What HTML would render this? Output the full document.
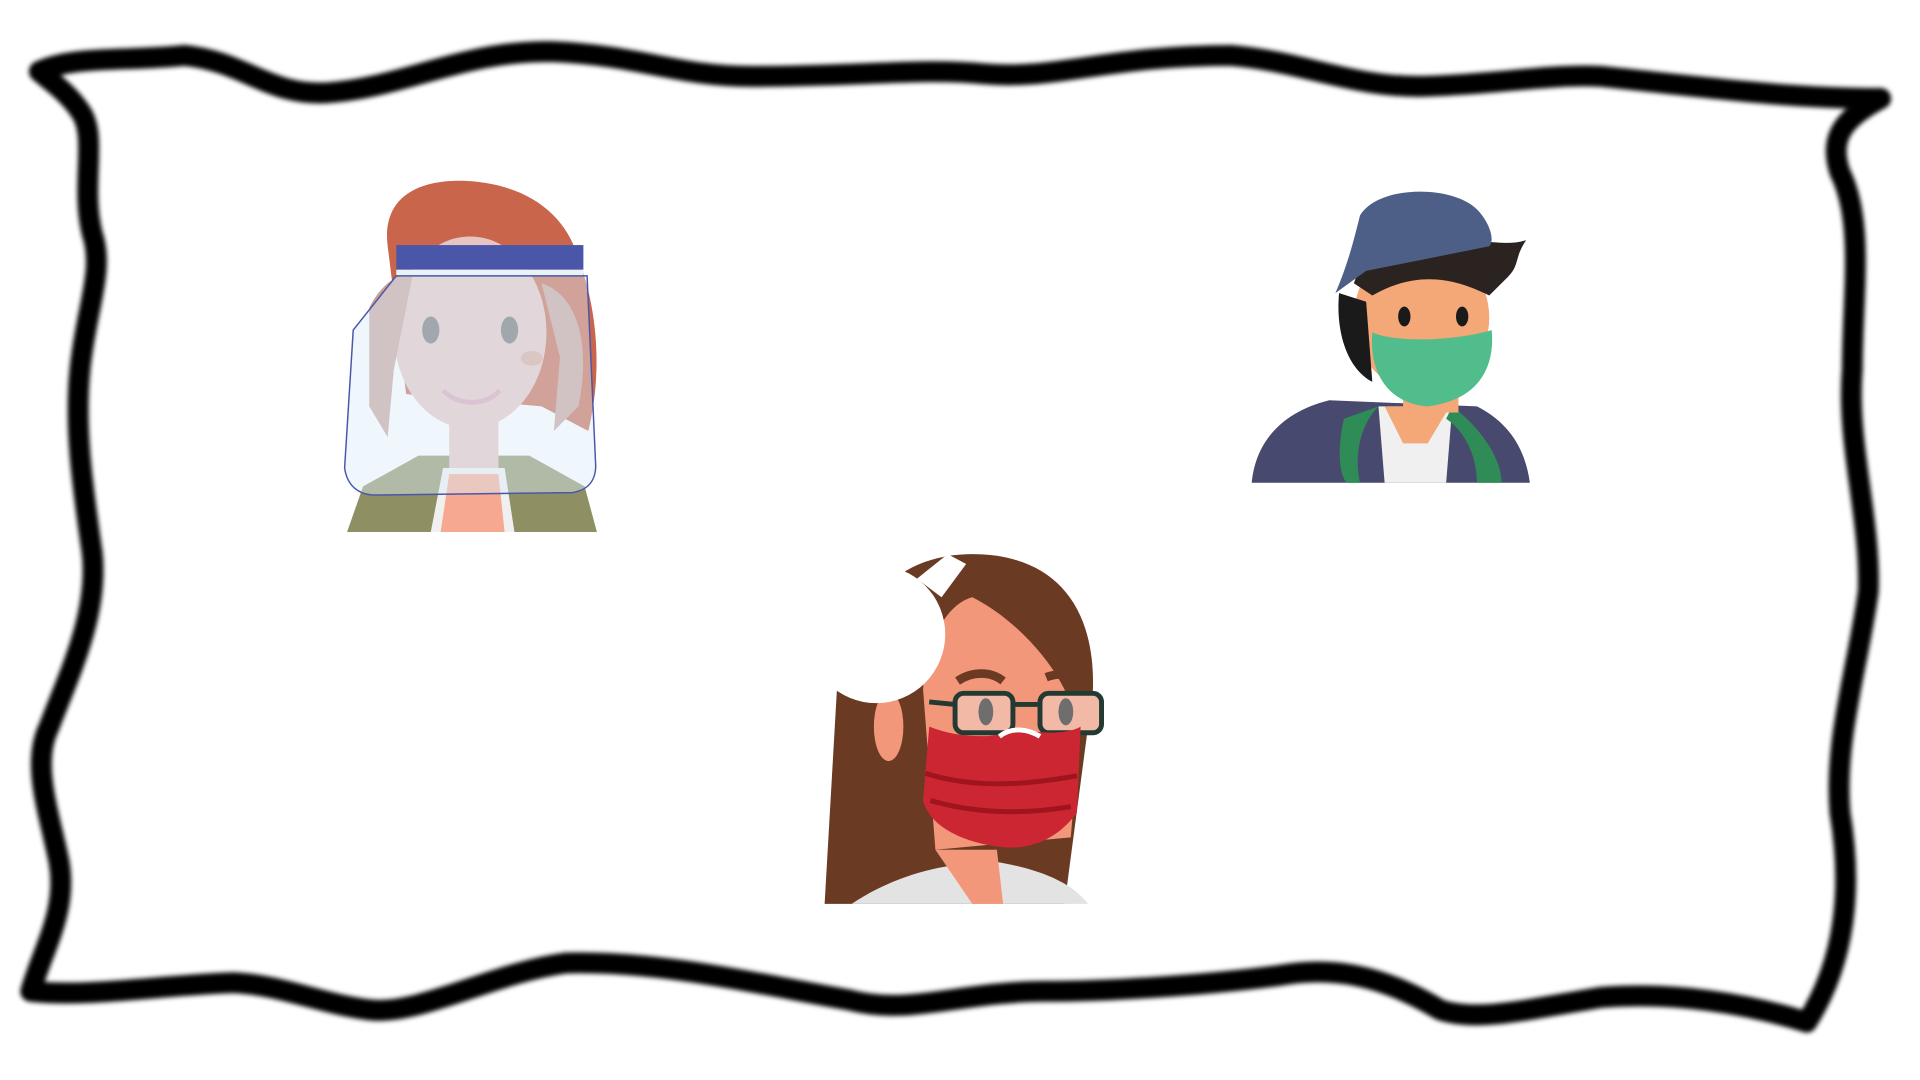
<!DOCTYPE html>
<html><head><style>html,body{margin:0;padding:0;background:#fff;width:1920px;height:1080px;overflow:hidden}</style></head>
<body>
<svg width="1920" height="1080" viewBox="0 0 1560 877" preserveAspectRatio="none" xmlns="http://www.w3.org/2000/svg">
<defs><filter id="b"><feGaussianBlur stdDeviation="2"/></filter></defs>
<path filter="url(#b)" fill="none" stroke="#000" stroke-width="17" stroke-linejoin="round" d="M32,58 C60,45 100,50 150,45 C200,50 220,80 270,75 C330,70 380,40 450,42 C520,45 550,62 610,62 C700,62 750,55 800,60 C860,65 900,45 1000,45 C1060,50 1100,72 1160,70 C1220,68 1260,60 1300,62 C1380,70 1450,80 1528,80 C1500,95 1485,110 1495,140 C1515,180 1505,240 1505,300 C1500,360 1520,420 1518,480 C1510,540 1490,600 1495,660 C1505,720 1500,780 1468,830 C1420,815 1360,805 1300,810 C1240,820 1200,830 1170,820 C1120,790 1080,785 1040,792 C980,800 900,805 850,805 C780,805 740,825 690,812 C620,800 540,780 460,782 C400,790 340,825 300,820 C260,815 230,800 190,798 C130,800 70,810 25,805 C35,770 55,740 48,700 C40,660 25,620 40,590 C55,550 80,500 75,450 C68,400 60,350 65,300 C70,250 85,220 75,190 C65,150 80,110 65,90 C55,75 40,65 32,58 Z"/>
<g>
<path d="M282,432 L295,395 L340,370 L430,370 L475,395 L485,432 Z" fill="#8e8f63"/>
<path d="M350,432 L360,380 L410,380 L418,432 Z" fill="#f0f0f0"/>
<path d="M358,432 L365,385 L405,385 L410,432 Z" fill="#f6a990"/>
<path d="M315,200 C310,160 340,145 380,147 C430,150 460,175 470,210 C485,250 490,300 478,350 L440,330 L330,320 Z" fill="#c9654b"/>
<ellipse cx="382" cy="270" rx="62" ry="78" fill="#e6c5c2"/>
<rect x="365" y="320" width="40" height="60" fill="#e6c5c2"/>
<ellipse cx="350" cy="268" rx="7" ry="11" fill="#6f6f6f"/>
<ellipse cx="414" cy="268" rx="7" ry="11" fill="#6f6f6f"/>
<ellipse cx="432" cy="291" rx="9" ry="6" fill="#d9a898"/>
<path d="M360,317 C372,330 395,330 406,317" stroke="#d9a3b3" stroke-width="4" fill="none"/>
<path d="M300,250 C310,230 325,220 335,225 L320,300 L315,355 L300,330 Z" fill="#c9a098"/>
<path d="M440,230 C470,240 480,280 470,330 L450,350 L455,290 Z" fill="#c9a098"/>
<rect x="322" y="199" width="152" height="20" fill="#4a57a8"/>
<rect x="322" y="219" width="152" height="5" fill="#e9f2f7"/>
<path d="M287,268 L280,380 C282,395 292,402 305,402 L465,400 C478,398 484,390 484,378 L477,224 L322,224 Z" fill="#dbeefb" fill-opacity="0.45" stroke="#4a57a8" stroke-width="1.2"/>
</g>
<g>
<path d="M1017,392 C1020,360 1040,335 1080,325 L1200,330 C1230,345 1240,370 1243,392 Z" fill="#474a6e"/>
<path d="M1120,330 L1180,330 L1175,392 L1125,392 Z" fill="#f0f0f0"/>
<path d="M1125,330 L1178,330 L1160,360 L1140,360 Z" fill="#f4a777"/>
<path d="M1092,340 C1085,370 1090,390 1095,392 L1105,392 C1100,370 1105,345 1120,330 Z" fill="#2f8c57"/>
<path d="M1180,330 C1200,345 1220,370 1220,392 L1200,392 C1200,370 1190,350 1175,340 Z" fill="#2f8c57"/>
<rect x="1140" y="270" width="45" height="65" fill="#f4a777"/>
<ellipse cx="1155" cy="258" rx="55" ry="60" fill="#f4a777"/>
<path d="M1088,238 C1085,270 1095,300 1115,310 L1110,245 Z" fill="#1a1a1a"/>
<path d="M1100,230 C1110,200 1140,190 1180,195 C1210,195 1225,200 1240,195 C1230,210 1235,215 1225,225 L1210,240 C1180,225 1150,220 1115,240 Z" fill="#2b2320"/>
<path d="M1085,238 C1095,215 1100,195 1105,175 C1120,150 1180,150 1200,170 C1210,180 1215,195 1210,200 L1110,220 Z" fill="#4d5f86"/>
<ellipse cx="1141" cy="257" rx="5" ry="8" fill="#1a1a1a"/>
<ellipse cx="1188" cy="257" rx="5" ry="8" fill="#1a1a1a"/>
<path d="M1115,270 C1140,280 1190,275 1212,268 C1215,300 1200,325 1160,330 C1130,328 1112,305 1115,270 Z" fill="#52bd8c"/>
</g>
<g>
<path d="M670,734 L680,560 C690,490 730,450 790,450 C855,450 890,490 888,560 L865,734 Z" fill="#6b3a23"/>
<path d="M692,734 C720,715 760,700 810,700 C840,705 870,715 884,734 Z" fill="#e3e3e3"/>
<path d="M760,690 L790,734 L815,734 L810,690 Z" fill="#f3977a"/>
<path d="M750,560 C752,520 770,490 790,485 C820,500 850,530 865,560 L875,620 L870,680 L760,690 Z" fill="#f3977a"/>
<ellipse cx="722" cy="590" rx="12" ry="28" fill="#f3977a"/>
<path d="M778,553 C790,545 805,545 815,553" stroke="#6b3a23" stroke-width="7" fill="none"/>
<path d="M850,550 C860,546 875,547 885,553" stroke="#6b3a23" stroke-width="7" fill="none"/>
<rect x="776" y="563" width="47" height="32" rx="7" fill="#f3b9a7" stroke="#223a31" stroke-width="4"/>
<rect x="845" y="563" width="50" height="32" rx="7" fill="#f3b9a7" stroke="#223a31" stroke-width="4"/>
<path d="M823,572 L845,572 M755,570 L776,572" stroke="#223a31" stroke-width="4"/>
<ellipse cx="801" cy="578" rx="6" ry="11" fill="#6e6e6e"/>
<ellipse cx="866" cy="578" rx="6" ry="11" fill="#6e6e6e"/>
<path d="M755,590 C780,600 810,600 830,592 C850,597 870,595 878,590 L875,660 C860,680 840,690 815,688 C780,684 755,670 750,650 Z" fill="#cb2631"/>
<path d="M752,628 C790,640 830,638 875,630 M756,650 C790,660 830,662 870,655" stroke="#a0141d" stroke-width="4" fill="none"/>
<path d="M812,598 C822,590 835,592 845,598" stroke="#fff" stroke-width="4" fill="none"/>
<circle cx="712" cy="515" r="56" fill="#fff"/>
<path d="M745,470 L770,450 L785,458 L765,485 Z" fill="#fff"/>
</g>
</svg>
</body></html>
